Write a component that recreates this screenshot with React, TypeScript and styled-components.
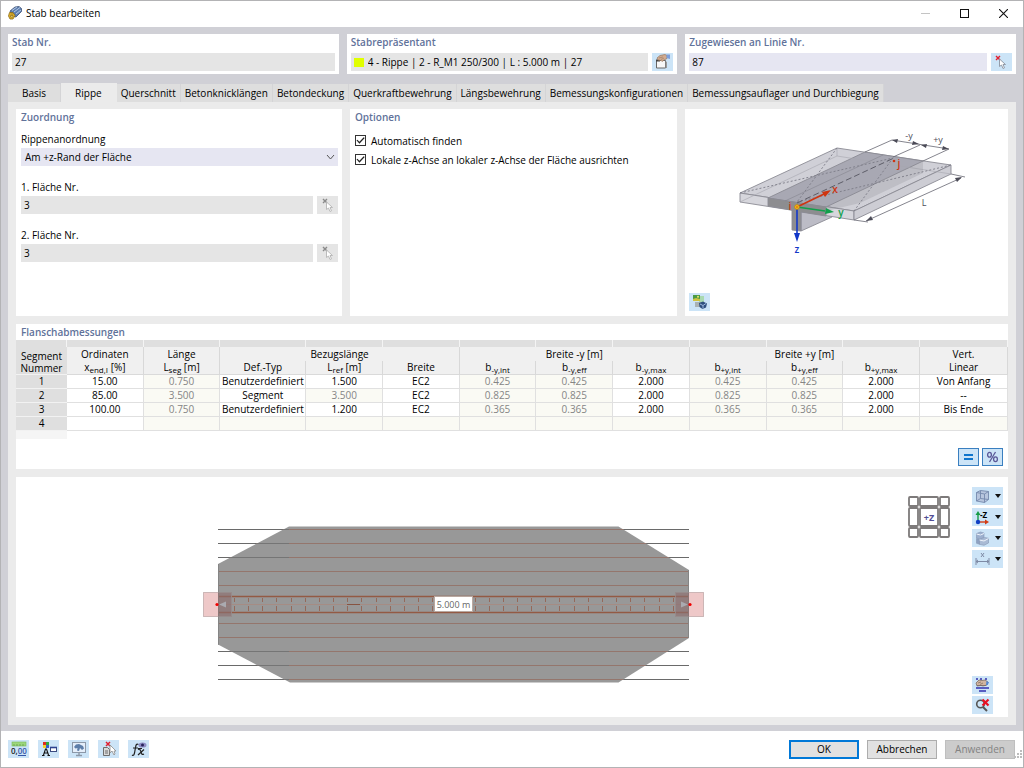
import React from "react";
import styled, { createGlobalStyle } from "styled-components";

const GlobalStyle = createGlobalStyle`
  *, *::before, *::after { box-sizing: border-box; }
  body { margin: 0; }
  body, button, input, select {
    font-family: "Open Sans", "Noto Sans", sans-serif;
    font-size: 10px;
    font-weight: 400;
    color: #000;
  }
  button, input, select { margin: 0; padding: 0; border: 0; border-radius: 0; }
  svg { display: block; }
  svg text { font-family: "Open Sans", "Noto Sans", sans-serif; }
`;

const Dialog = styled.main`
  display: flex;
  flex-direction: column;
  min-height: 100vh;
  border: 1px solid #b3b3b5;
  background: #fff;
`;

const TitleBar = styled.header`
  display: flex;
  align-items: center;
  height: 26px;
  padding: 0 8px 2px 7px;
`;

const Title = styled.h1`
  flex: 1;
  margin: 0 0 0 4px;
  font-size: 10px;
  font-weight: 400;
`;

const WindowButton = styled.button`
  display: grid;
  place-items: center;
  width: 39px;
  height: 24px;
  background: none;
  &:last-child { width: 24px; margin-left: 7px; }
`;

const Body = styled.div`
  display: flex;
  flex: 1;
  flex-direction: column;
  padding: 7px 7px 6px;
  background: #d0d0d6;
`;

const HeaderGroups = styled.div`
  display: grid;
  grid-template-columns: repeat(3, 1fr);
  gap: 8px;
  margin-bottom: 9px;
`;

const HeaderGroup = styled.section`
  height: 40px;
  padding: 0 4px;
  background: #fff;
`;

const GroupLabel = styled.label`
  display: block;
  height: 16px;
  margin-bottom: 3px;
  line-height: 16px;
  font-weight: 600;
  color: #61729a;
`;

const FieldRow = styled.div`
  display: flex;
  gap: 4px;
`;

const FieldBox = styled.div<{ $editable?: boolean }>`
  display: flex;
  flex: 1;
  align-items: center;
  gap: 4px;
  min-width: 0;
  height: 18px;
  padding: 0 3px;
  background: ${(p) => (p.$editable ? "#e6e6f2" : "#e5e5e5")};
`;

const FieldInput = styled.input`
  flex: 1;
  min-width: 0;
  height: 17px;
  background: none;
  outline: none;
`;

const Swatch = styled.span`
  width: 10px;
  height: 9px;
  background: #e0ff00;
`;

const IconButton = styled.button<{ $muted?: boolean; $framed?: boolean; $wide?: boolean }>`
  display: flex;
  align-items: center;
  justify-content: center;
  gap: 5px;
  flex: none;
  width: ${(p) => (p.$wide ? 31 : 21)}px;
  height: 18px;
  background: ${(p) => (p.$muted ? "#e5e5e5" : "#cce4f7")};
  border: ${(p) => (p.$framed ? "1px solid #3a7fc0" : "0")};
`;

const Tabs = styled.div`
  display: flex;
  align-items: flex-end;
  height: 19px;
`;

const Tab = styled.button<{ $active?: boolean; $wide?: boolean }>`
  height: ${(p) => (p.$active ? 19 : 18)}px;
  padding: 0 ${(p) => (p.$wide ? 14 : 4)}px;
  background: ${(p) => (p.$active ? "#ebebeb" : "#dedede")};
  border-right: 1px solid ${(p) => (p.$active ? "#ebebeb" : "#d4d4d6")};
  white-space: nowrap;
`;

const TabPage = styled.div`
  display: flex;
  flex: 1;
  flex-direction: column;
  gap: 8px;
  padding: 7px 8px 8px;
  background: #ebebeb;
`;

const Columns = styled.div`
  display: grid;
  grid-template-columns: 326fr 327fr 323fr;
  gap: 8px;
  min-height: 207px;
`;

const Panel = styled.section`
  display: flex;
  flex-direction: column;
  padding: 0 4px 0 5px;
  background: #fff;
`;

const PanelTitle = styled.h2`
  margin: 0 0 6px;
  line-height: 16px;
  font-size: 10px;
  font-weight: 600;
  color: #61729a;
`;

const Setting = styled.div`
  margin-bottom: 13px;
`;

const SettingLabel = styled.label`
  display: block;
  height: 17px;
  line-height: 16px;
`;

const SelectBox = styled.div`
  display: grid;
  align-items: center;
  height: 18px;
  background: #e6e6f2;
  & > * { grid-area: 1 / 1; }
  & > svg { justify-self: end; margin-right: 3px; pointer-events: none; }
`;

const Select = styled.select`
  width: 100%;
  height: 18px;
  padding: 0 4px;
  appearance: none;
  background: none;
  outline: none;
`;

const CheckRow = styled.label`
  display: flex;
  align-items: center;
  gap: 5px;
  height: 19px;
`;

const Checkbox = styled.input`
  display: grid;
  place-items: center;
  width: 11px;
  height: 11px;
  appearance: none;
  border: 1px solid #333;
  background: #fff;
  &:checked::after {
    content: "";
    width: 9px;
    height: 7px;
    background: #222;
    clip-path: polygon(5% 48%, 15% 38%, 38% 68%, 85% 5%, 97% 15%, 38% 95%);
  }
`;

const PreviewPanel = styled(Panel)`
  align-items: flex-start;
  justify-content: space-between;
  padding: 0 0 5px;
  & > svg { width: 100%; height: 180px; }
  & > button { margin-left: 4px; }
`;

const TablePanel = styled.section`
  background: #fff;
`;

const TableTitle = styled(PanelTitle)`
  margin: 0;
  padding-left: 5px;
`;

const Table = styled.table`
  width: 100%;
  table-layout: fixed;
  border-collapse: separate;
  border-spacing: 0;
  text-align: center;
  line-height: 13px;
`;

const StripCell = styled.td`
  height: 7px;
  padding: 0;
  background: #dfdfdf;
  border-right: 1px solid #f4f4f4;
`;

const HeadCell = styled.th<{ $last?: boolean }>`
  height: ${(p) => (p.$last ? 13 : 14)}px;
  padding: 0;
  font-weight: 400;
  white-space: nowrap;
  background: #f0f0f0;
  border-right: 1px solid #d8d8d8;
  border-bottom: ${(p) => (p.$last ? "1px solid #dadada" : "0")};
`;

const RowHead = styled.th`
  height: 14px;
  padding: 0;
  font-weight: 400;
  background: #dfdfdf;
  border-bottom: 1px solid #f2f2f2;
`;

const CornerHead = styled(RowHead)`
  vertical-align: bottom;
  line-height: 12px;
`;

const Cell = styled.td<{ $locked?: boolean }>`
  height: 14px;
  padding: 0;
  white-space: nowrap;
  color: ${(p) => (p.$locked ? "#858585" : "#000")};
  background: ${(p) => (p.$locked ? "#fafaf4" : "#fff")};
  border-right: 1px solid #e0e0e0;
  border-bottom: 1px solid #e0e0e0;
`;

const TailCell = styled.td`
  height: 8px;
  padding: 0;
  background: #f5f5f5;
`;

const Sub = styled.span`
  position: relative;
  top: 2px;
  font-size: 8px;
`;

const TableActions = styled.div`
  display: flex;
  justify-content: flex-end;
  gap: 3px;
  padding: 9px 5px 3px;
`;

const Stage = styled.section`
  display: flex;
  flex: 1;
  min-height: 239px;
  padding-right: 5px;
  background: #fff;
`;

const Plan = styled.svg`
  flex: 1;
  min-width: 0;
  height: 100%;
  min-height: 239px;
`;

const ViewCube = styled.svg`
  flex: none;
  width: 42px;
  height: 42px;
  margin: 19px 22px 0 0;
`;

const ToolColumn = styled.div`
  display: flex;
  flex-direction: column;
  justify-content: space-between;
  padding: 10px 0 3px;
`;

const ToolStack = styled.div<{ $gap: number }>`
  display: flex;
  flex-direction: column;
  gap: ${(p) => p.$gap}px;
`;

const Footer = styled.footer`
  display: flex;
  align-items: center;
  justify-content: space-between;
  height: 36px;
  padding: 0 0 0 7px;
`;

const FooterTools = styled.div`
  display: flex;
  gap: 9px;
`;

const FooterActions = styled.div`
  display: flex;
  align-items: center;
  gap: 8px;
`;

const DialogButton = styled.button<{ $primary?: boolean }>`
  width: 70px;
  height: 19px;
  background: #e1e1e1;
  border: ${(p) => (p.$primary ? "2px solid #0078d7" : "1px solid #adadad")};
  &:disabled { color: #838383; background: #cccccc; border-color: #bfbfbf; }
`;

const SizeGrip = styled.svg`
  align-self: flex-end;
  width: 9px;
  height: 9px;
  margin-left: -9px;
`;

const PickIcon = ({ muted }: { muted?: boolean }) => (
  <svg width="14" height="16" viewBox="0 0 14 16">
    <path d="M2 2l4 4M6 2L2 6" stroke={muted ? "#8a8a8a" : "#e02030"} strokeWidth="1.4" />
    <path d="M5.500 5v7.500l2-1.500 1.500 3.500 1.500-.7-1.500-3.300h2.500z" fill="#fff" stroke={muted ? "#b4b4b4" : "#8a93a0"} strokeWidth=".9" />
  </svg>
);

const EditIcon = () => (
  <svg width="17" height="16" viewBox="0 0 17 16">
    <path d="M2.500 6.500h9v7.500h-9z" fill="#f7f7f7" stroke="#666" />
    <path d="M2 6.500h4" stroke="#444" strokeWidth="2" />
    <path d="M11.500 7v7h1.500V8z" fill="#999" />
    <path d="M3 4l3-2.500 5-1 2 1v3l-3 1.500-2 1.500-1-1-3-.5z" fill="#d3ac90" stroke="#94765f" strokeWidth=".7" />
    <path d="M5 4l4-1M7 5.500l3-1.500" stroke="#94765f" strokeWidth=".6" />
    <path d="M12.500.5h3.500v4.500l-3.500-1z" fill="#7d9fdc" />
  </svg>
);

const AppIcon = () => (
  <svg width="14" height="14" viewBox="0 0 14 14">
    <path d="M2 5l5-4 4-.5 2.500 2v3L8 11l-4-1z" fill="#5e7fb0" stroke="#3c5176" strokeWidth=".8" />
    <path d="M4 4.500l5-3.500M6 6l6-4.500M8 8l5-4" stroke="#bdd0ea" strokeWidth=".9" />
    <path d="M1.500 6.500h3.500l2 3-2 3.500h-3l-1.500-3z" fill="#e3b52c" stroke="#8b6b18" strokeWidth=".8" />
    <path d="M2.500 8h2.500M2.500 9.500h2.500v1.500h-2.500z" stroke="#8b6b18" strokeWidth=".7" fill="#fff0a0" />
  </svg>
);

const ImageIcon = () => (
  <svg width="16" height="16" viewBox="0 0 16 16">
    <path d="M7 2h5v7H7z" fill="#a9d9b0" />
    <rect x="1" y="1" width="7" height="6" fill="#4b9b46" />
    <path d="M1 5l3-1 4 1v2H1z" fill="#cfc23f" />
    <circle cx="6" cy="2.800" r="1" fill="#f3e26b" />
    <rect x="3" y="8" width="6" height="5" fill="#a9b2b4" />
    <path d="M7 9l4-1.500 4 2-1 4-3.500 1.500-3-2z" fill="#2f4f7e" />
    <path d="M8 10l3 1.500 3-2M11 11.500v3" fill="none" stroke="#a9c4ea" strokeWidth=".9" />
  </svg>
);

const Caret = () => (
  <svg width="6" height="4" viewBox="0 0 6 4"><path d="M0 0h6L3 4z" fill="#111" /></svg>
);

const SolidIcon = () => (
  <svg width="15" height="15" viewBox="0 0 15 15" fill="#b8c6de" stroke="#7589ad" strokeWidth=".9">
    <path d="M1.500 3.500l4-2 8 1v8l-4 3-8-1.500z" />
    <path d="M1.500 3.500l8 1.500 4-2.500M9.500 5v8.500M5.500 1.500v8l-4 2.500M5.500 9.500l8 1" fill="none" />
  </svg>
);

const AxisIcon = () => (
  <svg width="15" height="15" viewBox="0 0 15 15">
    <path d="M3 12V4" stroke="#159b45" strokeWidth="1.4" />
    <path d="M0.500 5L3 1l2.500 4z" fill="#159b45" />
    <path d="M3 12h7" stroke="#d23c14" strokeWidth="1.4" />
    <path d="M10 9.500l4 2.500-4 2.500z" fill="#d23c14" />
    <circle cx="3" cy="12" r="2.200" fill="#1240c4" />
    <text x="5" y="8" fontSize="8" fontWeight="700">-Z</text>
  </svg>
);

const StairIcon = () => (
  <svg width="15" height="15" viewBox="0 0 15 15" stroke="#8496b4" strokeWidth=".6">
    <path d="M1.500 2.500l4-1.500 3.500 1v4.500l-3.500 1.500-4-1z" fill="#9db0cf" />
    <path d="M1.500 7.500l3 .8v5l-3-1z" fill="#8ea2c2" />
    <path d="M4.500 8.500l5-2 4 .7v4.800l-4.500 2.300-4.500-1z" fill="#a9bad4" />
    <path d="M1.500 3l4 1 3.500-1.500M4.500 9l4.500 1 4.500-2.500" fill="none" stroke="#eef3fb" strokeWidth="1" />
  </svg>
);

const DimensionIcon = () => (
  <svg width="15" height="15" viewBox="0 0 15 15" stroke="#7e8aa5" fill="none">
    <path d="M1 6v7M14 6v7M1 9.500h13M3 8l-2 1.500 2 1.500M12 8l2 1.500-2 1.500" />
    <path d="M6 1l3 4M9 1L6 5" />
  </svg>
);

const LayersIcon = () => (
  <svg width="15" height="16" viewBox="0 0 15 16">
    <path d="M1 2h2M5 2h2M10 2h2M1 11h13M4 14h7" stroke="#3030b0" strokeWidth="1.500" />
    <path d="M1 6l3-3 3 .5 3-.5 3 2-1 3-4 1-2-.5-4 .5z" fill="#d0b5a0" stroke="#715e55" strokeWidth=".7" />
    <path d="M3 6l3-1M5 7.500l3-1.500M2 8.500h9" stroke="#715e55" strokeWidth=".6" />
    <path d="M11.500 4l2.500 1.500-1.500 2.500h-1.500z" fill="#4e87d6" />
  </svg>
);

const ClearZoomIcon = () => (
  <svg width="15" height="16" viewBox="0 0 15 16">
    <circle cx="5.500" cy="7" r="3.800" fill="none" stroke="#555" strokeWidth="1.600" />
    <path d="M8 10l4 4" stroke="#555" strokeWidth="2" />
    <path d="M7.500 2.500l6 6M13.500 2.500l-6 6" stroke="#e81123" strokeWidth="2.200" />
  </svg>
);

const UnitsIcon = () => (
  <svg width="16" height="16" viewBox="0 0 16 16">
    <rect x="1" y="1" width="14" height="4" fill="#9cd67c" stroke="#78b85a" strokeWidth=".6" />
    <path d="M3 3v2M6 3v2M9 3v2M12 3v2" stroke="#5f9a46" strokeWidth=".7" />
    <text x="0" y="13" fontSize="8" fontWeight="600" fill="#222">0,<tspan fill="#3556a8">00</tspan></text>
    <path d="M7 14.500h8" stroke="#3556a8" />
  </svg>
);

const DisplayIcon = () => (
  <svg width="16" height="16" viewBox="0 0 16 16">
    <path d="M2 1h3v3H2z" fill="#e22b21" /><path d="M5 1h3v3H5z" fill="#2fa83a" />
    <path d="M2 4h3v3H2z" fill="#f1d02c" /><path d="M5 4h3v3H5z" fill="#315ed0" />
    <path d="M2.500 14l2-6h1l2 6M3.500 12h3M1 14.500h2.500M6.500 14.500H9" fill="none" stroke="#111" strokeWidth="1.100" />
    <rect x="9.500" y="6.500" width="6" height="4" fill="#fff" stroke="#3c4b80" />
    <path d="M9 6.500h7" stroke="#2d428f" strokeWidth="1.600" />
  </svg>
);

const MonitorIcon = () => (
  <svg width="16" height="16" viewBox="0 0 16 16">
    <rect x="1.500" y="1.500" width="13" height="10" fill="#e4eefa" stroke="#8c98a8" />
    <path d="M3 6l2-2.500 3-.5 4 2 1 2.500-2 1.500-2-2-1 3-2-.5.500-2.500-2 .5z" fill="#5d7ea9" />
    <path d="M8 12v2M5 14.500h6" stroke="#8c98a8" strokeWidth="1.400" />
  </svg>
);

const PickDocIcon = () => (
  <svg width="16" height="16" viewBox="0 0 16 16">
    <path d="M2.500 6.500h4l2 2v6h-6z" fill="#d9d9d9" stroke="#6d6d6d" />
    <path d="M4 10h3M4 12h3" stroke="#6d6d6d" />
    <path d="M5 1l4 4M9 1L5 5" stroke="#e02030" strokeWidth="1.500" />
    <path d="M9 4v8l2-2 2 4 1-1-1-3h2z" fill="#fff" stroke="#8c8c8c" strokeWidth=".8" />
  </svg>
);

const FormulaIcon = () => (
  <svg width="16" height="16" viewBox="0 0 16 16" fill="none">
    <path d="M7.500 3.500c-2-1-2.500 0-3 3L3.500 12c-.5 2-1 3-2.500 2M2 7h5" stroke="#222" strokeWidth="1.200" />
    <path d="M7 8.500c2-1 2 0 3 2.500s1 3 3 2M13 8.500l-6 5.500M7 7.500h4" stroke="#222" strokeWidth="1.200" />
    <ellipse cx="11.500" cy="4" rx="4" ry="2.600" fill="#8e8dc4" />
    <circle cx="11.500" cy="4" r="1.500" fill="#28245c" />
  </svg>
);

const RibPreview = () => (
  <svg viewBox="685 109 323 180" role="img" aria-label="Rippe">
    <g stroke="#8b8b94" strokeWidth=".9" strokeLinejoin="round">
      <path d="M801 209v22l31-14v-4z" fill="#bcbcc6" />
      <path d="M740 193l97-45 114 17-97 46z" fill="#d0d0d7" />
      <path d="M740 193l114 18v9l-114-18z" fill="#d6d6dc" />
      <path d="M854 211l97-46v9l-97 46z" fill="#cdcdd4" />
      <path d="M768 198l97-46 58 9-97 46z" fill="#a8a8b3" />
      <path d="M768 198l58 9v9l-25-4v19l-9-1v-20l-24-4z" fill="#8d8d90" />
      <path d="M740 202l97-46 114 18M837 148v8" fill="none" stroke="#a6a6ae" strokeWidth=".6" />
    </g>
    <path d="M826 207l97-46v12l-63 30-34 8z" fill="#888890" opacity=".25" />
    <path d="M740 193l153-35M837 148l-40 54M797 202l154-37M854 211l39-53" fill="none" stroke="#7c7c87" strokeWidth=".9" strokeDasharray="2 2" />
    <path d="M797 203l97-45" stroke="#5d5d68" strokeDasharray="6 3" />
    <path d="M785 201l98-46" stroke="#84848e" strokeWidth=".6" />
    <g stroke="#666671" strokeWidth=".8" fill="none">
      <path d="M865 152l27-12 57 9-26 12M893 157l27-12M854 220l14 2M951 174l14 3M866 221l95-43" />
    </g>
    <g fill="#4b4b57">
      <path d="M892 140l6-1-1 4zM919 144l-6-3-1 4zM921 145l6-1-1 4zM949 149l-6-3-1 4zM866 221l5-5 2 4zM962 177l-7 1 2 4z" />
    </g>
    <path d="M797 207l27-13" stroke="#cf3410" strokeWidth="1.600" />
    <path d="M831 190l-9 2 3 5z" fill="#cf3410" />
    <path d="M797 207l28 4" stroke="#11a04b" strokeWidth="1.600" />
    <path d="M834 212l-8-4-1 6z" fill="#11a04b" />
    <path d="M797 207v27" stroke="#1238c8" strokeWidth="1.600" />
    <path d="M797 242l-3-9h6z" fill="#1238c8" />
    <circle cx="797" cy="207" r="2.300" fill="#ffc518" stroke="#c48b10" />
    <circle cx="797" cy="207" r=".8" fill="#cf3410" />
    <circle cx="894" cy="161" r="1.300" fill="#cf3410" />
    <g fontSize="10" textAnchor="middle">
      <text x="909" y="139" fontSize="9" fill="#4d4d5a">-y</text>
      <text x="938" y="143" fontSize="9" fill="#4d4d5a">+y</text>
      <text x="924" y="206" fontSize="9" fill="#4d4d5a">L</text>
      <text x="835" y="193" fontWeight="600" fill="#cf3410">x</text>
      <text x="899" y="167" fontWeight="600" fill="#cf3410">j</text>
      <text x="790" y="210" fontWeight="600" fill="#cf3410">i</text>
      <text x="841" y="216" fontWeight="600" fill="#11a04b">y</text>
      <text x="797" y="253" fontWeight="600" fill="#1238c8">z</text>
    </g>
  </svg>
);

const OUTLINE = "M218 564L289 526.500H618.500L689 570V638L618.500 682.500H290L218 644.500Z";
const LEVELS = [529.5, 543.5, 557.5, 571.5, 585.5, 623.5, 637.5, 651.5, 665.5, 679.5];
const OUTER_LEVELS = [529.5, 543.5, 557.5, 651.5, 665.5, 679.5];
const STIRRUPS = Array.from({ length: 32 }, (_, i) => Math.round(234 + i * 14.15) + 0.5);

const MemberPlan = () => (
  <Plan viewBox="16 477 892 240" role="img" aria-label="Stabansicht">
    <defs><clipPath id="outline"><path d={OUTLINE} /></clipPath></defs>
    <path d={LEVELS.map((y) => `M218 ${y}H689`).join("")} stroke="#6a6a6a" strokeWidth="1.200" />
    <path d={OUTLINE} fill="#989898" />
    <g clipPath="url(#outline)">
      <path d={LEVELS.map((y) => `M218 ${y}H689`).join("")} stroke="#94766d" />
      <path d={OUTER_LEVELS.map((y) => `M218 ${y}H289`).join("")} stroke="#757575" />
      <path d={STIRRUPS.map((x) => `M${x} 598V602M${x} 606V611`).join("")} stroke="#94695a" />
      <path d="M218 604.500H689" stroke="#a58c84" />
      <path d="M218 596.500H689M218 612.500H689" stroke="#935a44" strokeWidth="1.300" />
      <path d="M347 604.500h13" stroke="#875341" />
      <path d="M218.500 564V645M688.500 570V638" stroke="#858585" />
    </g>
    <g fill="#c84848" fillOpacity=".3" stroke="#b9a3a3" strokeOpacity=".7">
      <rect x="203.500" y="592.500" width="28" height="24" />
      <rect x="675.500" y="592.500" width="28" height="24" />
    </g>
    <path d="M218 592h14v25h-14zM675 592h14v25h-14z" fill="#7b7979" opacity=".5" />
    <path d="M219 604.500l7-3v6zM688 604.500l-7-3v6z" fill="#aaaab0" />
    <circle cx="217" cy="604.500" r="1.600" fill="#f00000" />
    <circle cx="690" cy="604.500" r="1.600" fill="#f00000" />
    <rect x="434.500" y="596.500" width="38" height="15" fill="#fff" stroke="#b9a8a0" />
    <text x="453.500" y="608" fontSize="9" textAnchor="middle" fill="#666">5.000 m</text>
  </Plan>
);

const Field = ({ id, label, value }: { id: string; label: string; value: string }) => (
  <Setting>
    <SettingLabel htmlFor={id}>{label}</SettingLabel>
    <FieldRow>
      <FieldBox><FieldInput id={id} defaultValue={value} readOnly /></FieldBox>
      <IconButton $muted aria-label="Auswählen"><PickIcon muted /></IconButton>
    </FieldRow>
  </Setting>
);

const TABS = [
  "Basis", "Rippe", "Querschnitt", "Betonknicklängen", "Betondeckung", "Querkraftbewehrung",
  "Längsbewehrung", "Bemessungskonfigurationen", "Bemessungsauflager und Durchbiegung",
];

const ROWS = [
  ["15.00", "0.750", "Benutzerdefiniert", "1.500", "EC2", "0.425", "0.425", "2.000", "0.425", "0.425", "2.000", "Von Anfang"],
  ["85.00", "3.500", "Segment", "3.500", "EC2", "0.825", "0.825", "2.000", "0.825", "0.825", "2.000", "--"],
  ["100.00", "0.750", "Benutzerdefiniert", "1.200", "EC2", "0.365", "0.365", "2.000", "0.365", "0.365", "2.000", "Bis Ende"],
  ["", "", "", "", "", "", "", "", "", "", "", ""],
];

const Col = styled.col<{ $width?: number }>`
  width: ${(p) => (p.$width ? `${p.$width}px` : "auto")};
`;

const isLocked = (row: number, col: number) =>
  row === 3 ? col > 0 : [1, 5, 6, 8, 9].includes(col) || (row === 1 && col === 3);

const FlangeTable = () => (
  <Table aria-label="Flanschabmessungen">
    <colgroup>
      {Array.from({ length: 13 }, (_, i) => (
        <Col key={i} $width={i === 0 ? 51 : i === 3 ? 86 : i === 12 ? 88 : undefined} />
      ))}
    </colgroup>
    <thead>
      <tr>{Array.from({ length: 13 }, (_, i) => <StripCell key={i} />)}</tr>
      <tr>
        <CornerHead rowSpan={2}>Segment<br />Nummer</CornerHead>
        <HeadCell>Ordinaten</HeadCell>
        <HeadCell>Länge</HeadCell>
        <HeadCell colSpan={3}>Bezugslänge</HeadCell>
        <HeadCell colSpan={3}>Breite -y [m]</HeadCell>
        <HeadCell colSpan={3}>Breite +y [m]</HeadCell>
        <HeadCell>Vert.</HeadCell>
      </tr>
      <tr>
        <HeadCell $last>x<Sub>end,I</Sub> [%]</HeadCell>
        <HeadCell $last>L<Sub>seg</Sub> [m]</HeadCell>
        <HeadCell $last>Def.-Typ</HeadCell>
        <HeadCell $last>L<Sub>ref</Sub> [m]</HeadCell>
        <HeadCell $last>Breite</HeadCell>
        {["-y,int", "-y,eff", "-y,max", "+y,int", "+y,eff", "+y,max"].map((s) => (
          <HeadCell $last key={s}>b<Sub>{s}</Sub></HeadCell>
        ))}
        <HeadCell $last>Linear</HeadCell>
      </tr>
    </thead>
    <tbody>
      {ROWS.map((cells, r) => (
        <tr key={r}>
          <RowHead>{r + 1}</RowHead>
          {cells.map((c, i) => <Cell key={i} $locked={isLocked(r, i)}>{c}</Cell>)}
        </tr>
      ))}
      <tr><TailCell /></tr>
    </tbody>
  </Table>
);

const CUBE_SPANS = [[1, 9], [12, 18], [32, 9]];

export default function App() {
  return (
    <Dialog>
      <GlobalStyle />
      <TitleBar>
        <AppIcon />
        <Title>Stab bearbeiten</Title>
        <WindowButton aria-label="Minimieren"><svg width="9" height="9"><path d="M0 4.500h9" stroke="#c4c4c4" /></svg></WindowButton>
        <WindowButton aria-label="Maximieren"><svg width="9" height="9"><rect x=".5" y=".5" width="8" height="8" fill="none" stroke="#111" /></svg></WindowButton>
        <WindowButton aria-label="Schließen"><svg width="9" height="9"><path d="M0 0l9 9M9 0L0 9" stroke="#111" strokeWidth="1.100" /></svg></WindowButton>
      </TitleBar>
      <Body>
        <HeaderGroups>
          <HeaderGroup>
            <GroupLabel htmlFor="stab">Stab Nr.</GroupLabel>
            <FieldRow><FieldBox><FieldInput id="stab" defaultValue="27" readOnly /></FieldBox></FieldRow>
          </HeaderGroup>
          <HeaderGroup>
            <GroupLabel htmlFor="rep">Stabrepräsentant</GroupLabel>
            <FieldRow>
              <FieldBox><Swatch /><FieldInput id="rep" defaultValue="4 - Rippe | 2 - R_M1 250/300 | L : 5.000 m | 27" readOnly /></FieldBox>
              <IconButton aria-label="Bearbeiten"><EditIcon /></IconButton>
            </FieldRow>
          </HeaderGroup>
          <HeaderGroup>
            <GroupLabel htmlFor="linie">Zugewiesen an Linie Nr.</GroupLabel>
            <FieldRow>
              <FieldBox $editable><FieldInput id="linie" defaultValue="87" /></FieldBox>
              <IconButton aria-label="Linie auswählen"><PickIcon /></IconButton>
            </FieldRow>
          </HeaderGroup>
        </HeaderGroups>
        <Tabs role="tablist">
          {TABS.map((name, i) => (
            <Tab key={name} role="tab" aria-selected={i === 1} $active={i === 1} $wide={i < 2}>{name}</Tab>
          ))}
        </Tabs>
        <TabPage role="tabpanel">
          <Columns>
            <Panel>
              <PanelTitle>Zuordnung</PanelTitle>
              <Setting>
                <SettingLabel htmlFor="anordnung">Rippenanordnung</SettingLabel>
                <SelectBox>
                  <Select id="anordnung"><option>Am +z-Rand der Fläche</option></Select>
                  <svg width="9" height="5"><path d="M1 0l3.500 4L8 0" fill="none" stroke="#555" /></svg>
                </SelectBox>
              </Setting>
              <Field id="f1" label="1. Fläche Nr." value="3" />
              <Field id="f2" label="2. Fläche Nr." value="3" />
            </Panel>
            <Panel>
              <PanelTitle>Optionen</PanelTitle>
              <CheckRow><Checkbox type="checkbox" defaultChecked />Automatisch finden</CheckRow>
              <CheckRow><Checkbox type="checkbox" defaultChecked />Lokale z-Achse an lokaler z-Achse der Fläche ausrichten</CheckRow>
            </Panel>
            <PreviewPanel>
              <RibPreview />
              <IconButton aria-label="Darstellung"><ImageIcon /></IconButton>
            </PreviewPanel>
          </Columns>
          <TablePanel>
            <TableTitle>Flanschabmessungen</TableTitle>
            <FlangeTable />
            <TableActions>
              <IconButton $framed aria-label="Gleich"><svg width="11" height="10"><path d="M1 3h9M1 7h9" stroke="#0f75cc" strokeWidth="2" /></svg></IconButton>
              <IconButton $framed aria-label="Prozent">
                <svg width="13" height="12" fill="none" stroke="#5a5898" strokeWidth="1.300">
                  <ellipse cx="3.500" cy="3.800" rx="1.900" ry="2.400" /><ellipse cx="9.500" cy="8.200" rx="1.900" ry="2.400" /><path d="M9.500 1L3.500 11" />
                </svg>
              </IconButton>
            </TableActions>
          </TablePanel>
          <Stage>
            <MemberPlan />
            <ViewCube viewBox="0 0 42 42">
              <g fill="#fff" stroke="#7d7a7a" strokeWidth="1.800">
                {CUBE_SPANS.flatMap(([x, w]) =>
                  CUBE_SPANS.map(([y, h]) => (
                    <rect key={`${x}-${y}`} x={x} y={y} width={w} height={h} rx="1" />
                  ))
                )}
              </g>
              <text x="21" y="25" fontSize="9" fontWeight="700" textAnchor="middle" fill="#504d94">+Z</text>
            </ViewCube>
            <ToolColumn>
              <ToolStack $gap={3}>
                <IconButton $wide aria-label="Ansicht"><SolidIcon /><Caret /></IconButton>
                <IconButton $wide aria-label="Blickrichtung"><AxisIcon /><Caret /></IconButton>
                <IconButton $wide aria-label="Modell"><StairIcon /><Caret /></IconButton>
                <IconButton $wide aria-label="Bemaßung"><DimensionIcon /><Caret /></IconButton>
              </ToolStack>
              <ToolStack $gap={2}>
                <IconButton aria-label="Anzeige"><LayersIcon /></IconButton>
                <IconButton aria-label="Zoom zurücksetzen"><ClearZoomIcon /></IconButton>
              </ToolStack>
            </ToolColumn>
          </Stage>
        </TabPage>
      </Body>
      <Footer>
        <FooterTools>
          <IconButton aria-label="Einheiten"><UnitsIcon /></IconButton>
          <IconButton aria-label="Farben"><DisplayIcon /></IconButton>
          <IconButton aria-label="Bildschirm"><MonitorIcon /></IconButton>
          <IconButton aria-label="Objekt wählen"><PickDocIcon /></IconButton>
          <IconButton aria-label="Formel"><FormulaIcon /></IconButton>
        </FooterTools>
        <FooterActions>
          <DialogButton $primary>OK</DialogButton>
          <DialogButton>Abbrechen</DialogButton>
          <DialogButton disabled>Anwenden</DialogButton>
          <SizeGrip viewBox="0 0 9 9"><path d="M6 0h2v2H6zM3 3h2v2H3zM6 3h2v2H6zM0 6h2v2H0zM3 6h2v2H3zM6 6h2v2H6z" fill="#bdbdbd" /></SizeGrip>
        </FooterActions>
      </Footer>
    </Dialog>
  );
}
